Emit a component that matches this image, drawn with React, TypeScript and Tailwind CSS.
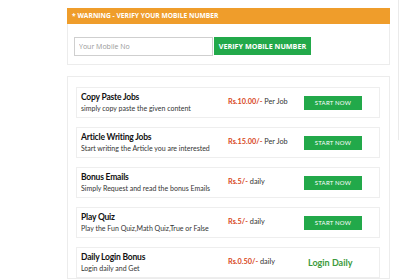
const jobs = [
  { title: "Copy Paste Jobs", desc: "simply copy paste the given content", price: "Rs.10.00/-", unit: "Per Job" },
  { title: "Article Writing Jobs", desc: "Start writing the Article you are interested", price: "Rs.15.00/-", unit: "Per Job" },
  { title: "Bonus Emails", desc: "Simply Request and read the bonus Emails", price: "Rs.5/-", unit: "daily" },
  { title: "Play Quiz", desc: "Play the Fun Quiz,Math Quiz,True or False", price: "Rs.5/-", unit: "daily" },
  { title: "Daily Login Bonus", desc: "Login daily and Get", price: "Rs.0.50/-", unit: "daily", login: true },
];

export default function App() {
  return (
    <div className="w-[400px] h-[280px] overflow-hidden bg-white flex font-['Lato',sans-serif]">
      <div className="w-[323px] ml-[67px] pt-[8px] flex flex-col">
        <div className="border border-[#ececec]">
          <div className="h-[16px] -m-px mb-0 bg-[#ef9d2b] px-[5px] flex items-center text-white text-[6.7px] font-bold font-['Open_Sans',sans-serif]">
            * WARNING - VERIFY YOUR MOBILE NUMBER
          </div>
          <div className="h-[40px] pt-[13px] pl-[6px] flex">
            <input
              type="text"
              placeholder="Your Mobile No"
              className="w-[139px] h-[19px] border border-[#cfcfcf] px-[4px] text-[7px] font-['Open_Sans',sans-serif] placeholder:text-[#999] outline-none"
            />
            <button className="w-[97px] h-[18px] ml-px bg-[#22a94a] text-white text-[7.2px] font-bold font-['Open_Sans',sans-serif]">
              VERIFY MOBILE NUMBER
            </button>
          </div>
        </div>

        <div className="mt-[11px] border border-[#ececec] pl-[8px] pr-[9px] pt-[10px] flex flex-col gap-[9px]">
          {jobs.map((j) => (
            <div key={j.title} className="h-[31px] border border-[#eeeeee] flex items-center">
              <div className="w-[151px] pl-[4px] flex flex-col">
                <span className="text-[8.5px] font-bold text-[#111] leading-[12px] tracking-[-0.2px]">{j.title}</span>
                <span className="text-[7px] text-[#333] leading-[11px]">{j.desc}</span>
              </div>
              <div className="w-[76px] text-[7.3px] text-[#333]">
                <span className="font-bold text-[#d8481c]">{j.price}</span> {j.unit}
              </div>
              {j.login ? (
                <span className="ml-[4px] text-[9px] font-bold text-[#3c9a3c]">Login Daily</span>
              ) : (
                <button className="w-[58px] h-[14px] bg-[#22a94a] text-white text-[6px] tracking-[0.2px]">
                  START NOW
                </button>
              )}
            </div>
          ))}
        </div>
      </div>
      <div className="ml-[8px] w-[2px] h-[140px] border-l border-[#eaeaea]" />
    </div>
  );
}
